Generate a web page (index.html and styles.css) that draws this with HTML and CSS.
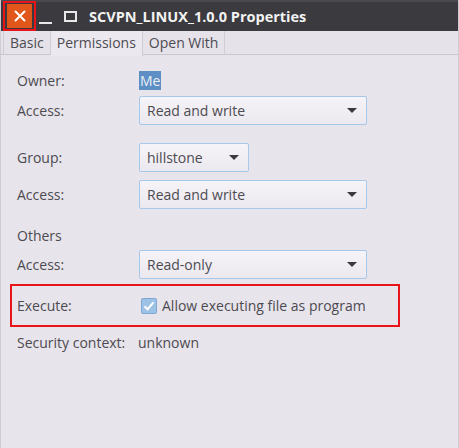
FILE: index.html
```html
<!DOCTYPE html>
<html>
<head>
<meta charset="utf-8">
<link rel="stylesheet" href="styles.css">
</head>
<body>
<div class="window">
  <div class="titlebar">
    <div class="close-wrap"><div class="close">
      <svg width="12" height="12" viewBox="0 0 12 12"><path d="M1.5 1.5 L10.5 10.5 M10.5 1.5 L1.5 10.5" stroke="#fff" stroke-width="2" stroke-linecap="round"/></svg>
    </div></div>
    <div class="minimize"></div>
    <div class="maximize"></div>
    <div class="title">SCVPN_LINUX_1.0.0 Properties</div>
  </div>
  <div class="tabs">
    <div class="tab">Basic</div>
    <div class="tab active">Permissions</div>
    <div class="tab">Open With</div>
  </div>
  <div class="content">
    <div class="row r-owner"><div class="label">Owner:</div><div class="value"><span class="sel">Me</span></div></div>
    <div class="row r-access1"><div class="label">Access:</div><div class="combo wide"><span>Read and write</span><i class="arrow"></i></div></div>
    <div class="row r-group"><div class="label">Group:</div><div class="combo narrow"><span>hillstone</span><i class="arrow"></i></div></div>
    <div class="row r-access2"><div class="label">Access:</div><div class="combo wide"><span>Read and write</span><i class="arrow"></i></div></div>
    <div class="row r-others"><div class="label">Others</div></div>
    <div class="row r-access3"><div class="label">Access:</div><div class="combo wide"><span>Read-only</span><i class="arrow"></i></div></div>
    <div class="row r-exec"><div class="label">Execute:</div><div class="check">
      <svg width="16" height="16" viewBox="0 0 16 16"><rect x="0.5" y="0.5" width="15" height="15" rx="1.5" fill="#9ec2e6" stroke="#7fa9d4"/><path d="M3.5 8.2 L6.6 11.2 L12.5 4.3" fill="none" stroke="#ffffff" stroke-width="2"/></svg>
      <span>Allow executing file as program</span></div></div>
    <div class="row r-sec"><div class="label sec">Security context:</div><div class="value">unknown</div></div>
  </div>
</div>
</body>
</html>
```

FILE: styles.css
```css
* { box-sizing: border-box; }
html, body { margin: 0; padding: 0; }
body {
  width: 459px; height: 448px; overflow: hidden;
  background: #e7e4eb;
  font-family: "Open Sans", "DejaVu Sans", sans-serif;
  font-size: 14px;
  color: #4d4b51;
}
.window {
  width: 459px; height: 448px;
  border-left: 1px solid #cfccd3;
  border-right: 1px solid #cfccd3;
  background: #e7e4eb;
}
.titlebar {
  height: 31px;
  background: #3b3a3f;
  border-top: 2px solid #4a494e;
  display: flex; align-items: center;
}
.close-wrap {
  margin-left: 2px;
  width: 33px; height: 30px;
  border: 2px solid #e8141a;
  display: flex; align-items: center; justify-content: center;
  margin-top: -1px;
}
.close {
  width: 25px; height: 24px;
  background: #e0561b;
  display: flex; align-items: center; justify-content: center;
}
.minimize {
  width: 13px; height: 2px; background: #e8e8e8;
  margin-left: 3px; margin-top: 12px;
}
.maximize {
  width: 13px; height: 11px; border: 2px solid #e8e8e8;
  margin-left: 12px;
}
.title {
  margin-left: 12px;
  color: #f2f2f2;
  font-weight: bold;
  font-size: 14.5px;
}
.tabs {
  height: 24px;
  display: flex;
  padding-left: 2px;
  border-bottom: 1px solid #c9c6cd;
  background: #e5e2e9;
}
.tab {
  padding: 0 6px;
  line-height: 23px;
  border-right: 1px solid #d0cdd4;
}
.tab:first-child { border-left: 1px solid #d0cdd4; }
.tab.active {
  background: #ebe8ef;
  height: 25px;
}
.content { padding: 10px 0 0 16px; }
.row { display: flex; align-items: center; }
.label { width: 122px; }
.label.sec { width: 121px; }
.r-owner { height: 30px; }
.sel { background: #5d8fc5; color: #e7eef6; padding: 0 1px; }
.combo {
  height: 29px;
  border: 1px solid #a6c8ea;
  border-radius: 2px;
  background: linear-gradient(#f6f4f8, #ebe8ef);
  display: flex; align-items: center; justify-content: space-between;
  padding: 0 9px 0 7px;
}
.combo.wide { width: 228px; }
.combo.narrow { width: 110px; }
.arrow {
  width: 0; height: 0;
  border-left: 5px solid transparent;
  border-right: 5px solid transparent;
  border-top: 5px solid #3a393d;
}
.r-access1 { margin-top: 1px; }
.r-group { margin-top: 18px; }
.r-access2 { margin-top: 8px; }
.r-others { margin-top: 16px; height: 20px; }
.r-access3 { margin-top: 5px; }
.r-exec {
  margin: 5px 0 0 -7px;
  width: 390px; height: 43px;
  border: 2px solid #e8141a;
  padding-left: 5px;
}
.r-exec .label { width: 124px; }
.check { display: flex; align-items: center; gap: 5px; }
.check svg { display: block; }
.r-sec { margin-top: 5px; height: 20px; }
```
